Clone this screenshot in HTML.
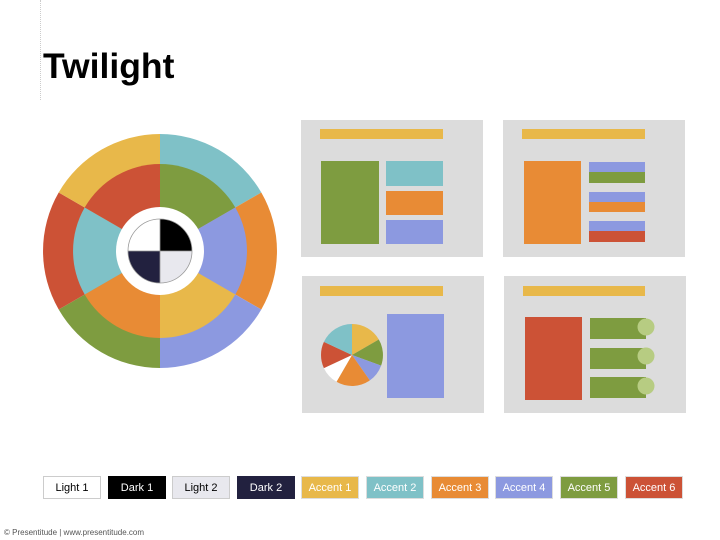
<!DOCTYPE html>
<html><head><meta charset="utf-8"><style>
body{margin:0;width:720px;height:540px;background:#fff;position:relative;overflow:hidden;font-family:"Liberation Sans",Arial,sans-serif}
.t{position:absolute;left:43px;top:46px;font-size:35.5px;font-weight:bold;color:#000}
.sw{position:absolute;top:476px;height:23px;width:58px;font-size:11px;line-height:23px;text-align:center;box-sizing:border-box;border:1px solid #ccc}
.f{position:absolute;left:4px;top:528px;font-size:8px;color:#555}
</style></head><body>
<div style="position:absolute;left:40px;top:0;height:100px;border-left:1px dotted #ccc"></div>
<div class="t">Twilight</div>
<svg width="720" height="540" style="position:absolute;left:0;top:0">
<g stroke="none">
<path d="M160,251 L160,134 A117,117 0 0 1 261.3,192.5Z" fill="#7FC1C7"/>
<path d="M160,251 L261.3,192.5 A117,117 0 0 1 261.3,309.5Z" fill="#E88B35"/>
<path d="M160,251 L261.3,309.5 A117,117 0 0 1 160,368Z" fill="#8C99E0"/>
<path d="M160,251 L160,368 A117,117 0 0 1 58.7,309.5Z" fill="#7E9C40"/>
<path d="M160,251 L58.7,309.5 A117,117 0 0 1 58.7,192.5Z" fill="#CC5236"/>
<path d="M160,251 L58.7,192.5 A117,117 0 0 1 160,134Z" fill="#E8B84A"/>
<path d="M160,251 L160,164 A87,87 0 0 1 235.3,207.5Z" fill="#7E9C40"/>
<path d="M160,251 L235.3,207.5 A87,87 0 0 1 235.3,294.5Z" fill="#8C99E0"/>
<path d="M160,251 L235.3,294.5 A87,87 0 0 1 160,338Z" fill="#E8B84A"/>
<path d="M160,251 L160,338 A87,87 0 0 1 84.7,294.5Z" fill="#E88B35"/>
<path d="M160,251 L84.7,294.5 A87,87 0 0 1 84.7,207.5Z" fill="#7FC1C7"/>
<path d="M160,251 L84.7,207.5 A87,87 0 0 1 160,164Z" fill="#CC5236"/>
<circle cx="160" cy="251" r="44" fill="#fff"/>
<path d="M160,251 L160,219 A32,32 0 0 1 192,251Z" fill="#000"/>
<path d="M160,251 L192,251 A32,32 0 0 1 160,283Z" fill="#E8E8EE"/>
<path d="M160,251 L160,283 A32,32 0 0 1 128,251Z" fill="#22213F"/>
<path d="M160,251 L128,251 A32,32 0 0 1 160,219Z" fill="#fff"/>
<circle cx="160" cy="251" r="32" fill="none" stroke="#999" stroke-width="0.8"/>
<line x1="128" y1="251" x2="192" y2="251" stroke="#999" stroke-width="0.8"/>
<line x1="160" y1="219" x2="160" y2="283" stroke="#999" stroke-width="0.8"/>
</g>
<rect x="301" y="120" width="182" height="137" fill="#DCDCDC"/>
<rect x="320" y="129" width="123" height="10" fill="#E8B84A"/>
<rect x="321" y="161" width="58" height="83" fill="#7E9C40"/>
<rect x="386" y="161" width="57" height="25" fill="#7FC1C7"/>
<rect x="386" y="191" width="57" height="24" fill="#E88B35"/>
<rect x="386" y="220" width="57" height="24" fill="#8C99E0"/>
<rect x="503" y="120" width="182" height="137" fill="#DCDCDC"/>
<rect x="522" y="129" width="123" height="10" fill="#E8B84A"/>
<rect x="524" y="161" width="57" height="83" fill="#E88B35"/>
<rect x="589" y="162" width="56" height="10" fill="#8C99E0"/>
<rect x="589" y="172" width="56" height="11" fill="#7E9C40"/>
<rect x="589" y="192" width="56" height="10" fill="#8C99E0"/>
<rect x="589" y="202" width="56" height="10" fill="#E88B35"/>
<rect x="589" y="221" width="56" height="10" fill="#8C99E0"/>
<rect x="589" y="231" width="56" height="11" fill="#CC5236"/>
<rect x="302" y="276" width="182" height="137" fill="#DCDCDC"/>
<rect x="320" y="286" width="123" height="10" fill="#E8B84A"/>
<rect x="387" y="314" width="57" height="84" fill="#8C99E0"/>
<path d="M352,355 L352,324 A31,31 0 0 1 378.8,339.5Z" fill="#E8B84A"/>
<path d="M352,355 L378.8,339.5 A31,31 0 0 1 381.1,365.6Z" fill="#7E9C40"/>
<path d="M352,355 L381.1,365.6 A31,31 0 0 1 369.8,380.4Z" fill="#8C99E0"/>
<path d="M352,355 L369.8,380.4 A31,31 0 0 1 336.5,381.8Z" fill="#E88B35"/>
<path d="M352,355 L336.5,381.8 A31,31 0 0 1 323.9,368.1Z" fill="#fff"/>
<path d="M352,355 L323.9,368.1 A31,31 0 0 1 323.9,341.9Z" fill="#CC5236"/>
<path d="M352,355 L323.9,341.9 A31,31 0 0 1 352,324Z" fill="#7FC1C7"/>
<rect x="504" y="276" width="182" height="137" fill="#DCDCDC"/>
<rect x="523" y="286" width="122" height="10" fill="#E8B84A"/>
<rect x="525" y="317" width="57" height="83" fill="#CC5236"/>
<rect x="590" y="318" width="56" height="21" fill="#7E9C40"/>
<rect x="590" y="348" width="56" height="21" fill="#7E9C40"/>
<rect x="590" y="377" width="56" height="21" fill="#7E9C40"/>
<circle cx="646" cy="327" r="8.5" fill="#B7CC82"/>
<circle cx="646" cy="356" r="8.5" fill="#B7CC82"/>
<circle cx="646" cy="386" r="8.5" fill="#B7CC82"/>
</svg>
<div class="sw" style="left:43px;background:#fff;color:#000">Light 1</div>
<div class="sw" style="left:108px;background:#000;color:#fff;border-color:#000">Dark 1</div>
<div class="sw" style="left:172px;background:#E8E8EE;color:#000">Light 2</div>
<div class="sw" style="left:237px;background:#22213F;color:#fff;border-color:#22213F">Dark 2</div>
<div class="sw" style="left:301px;background:#E8B84A;color:#fff;border-color:#ddd">Accent 1</div>
<div class="sw" style="left:366px;background:#7FC1C7;color:#fff;border-color:#ddd">Accent 2</div>
<div class="sw" style="left:431px;background:#E88B35;color:#fff;border-color:#ddd">Accent 3</div>
<div class="sw" style="left:495px;background:#8C99E0;color:#fff;border-color:#ddd">Accent 4</div>
<div class="sw" style="left:560px;background:#7E9C40;color:#fff;border-color:#ddd">Accent 5</div>
<div class="sw" style="left:625px;background:#CC5236;color:#fff;border-color:#ddd">Accent 6</div>
<div class="f">© Presentitude | www.presentitude.com</div>
</body></html>
